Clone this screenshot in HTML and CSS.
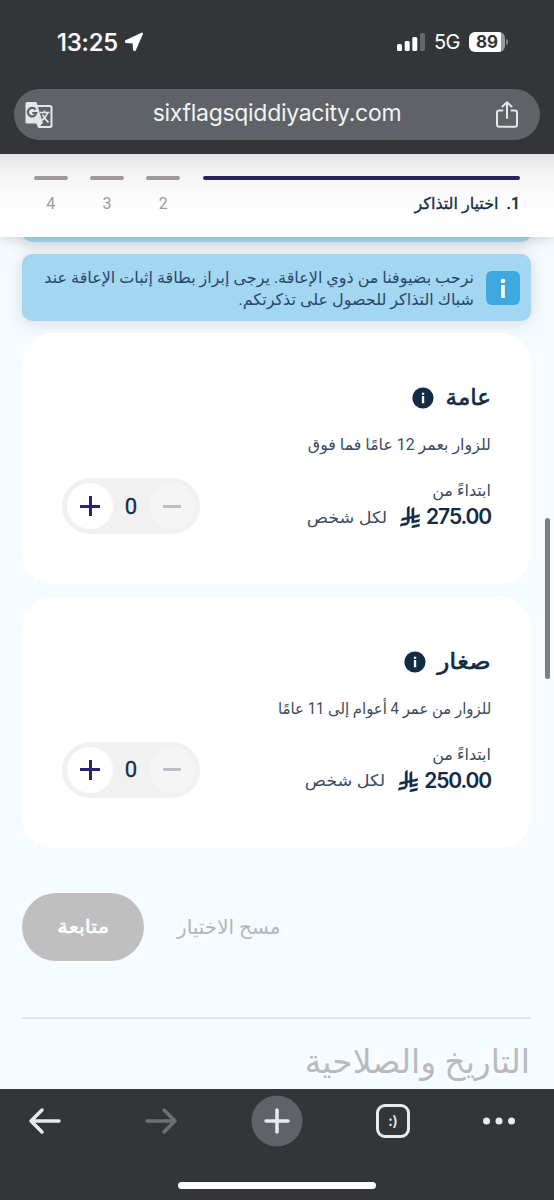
FILE: index.html
```html
<!DOCTYPE html>
<html lang="ar" dir="rtl">
<head>
<meta charset="utf-8">
<title>اختيار التذاكر</title>
<link rel="stylesheet" href="styles.css">
</head>
<body>
<svg class="defs" width="0" height="0">
  <symbol id="riyal" viewBox="0 0 1124.14 1256.39">
    <path d="M699.62,1113.02c-20.06,44.48-33.32,92.75-38.4,143.37l424.51-90.24c20.06-44.47,33.31-92.75,38.4-143.37l-424.51,90.24Z"/>
    <path d="M1085.73,895.8c20.06-44.47,33.32-92.75,38.4-143.37l-330.68,70.33v-135.2l292.27-62.11c20.06-44.47,33.32-92.75,38.4-143.37l-330.68,70.27V66.13c-50.67,28.45-95.67,66.32-132.25,110.99v403.35l-132.25,28.11V0c-50.67,28.44-95.67,66.32-132.25,110.99v525.69l-295.91,62.88c-20.06,44.47-33.33,92.75-38.42,143.37l334.33-71.05v170.26l-358.3,76.14c-20.06,44.47-33.32,92.75-38.4,143.37l375.04-79.7c30.53-6.35,56.77-24.4,73.83-49.24l68.78-101.97c7.14-10.55,11.3-23.27,11.3-36.97v-149.98l132.25-28.11v270.4l424.53-90.28Z"/>
  </symbol>
  <symbol id="info" viewBox="0 0 22 22">
    <circle cx="11" cy="11" r="10.6"/>
    <path fill="#fff" d="M9.900 5.800h2.300v2H9.900zM9.900 9h2.300v7.200H9.900z"/>
  </symbol>
</svg>

<header class="browser" dir="ltr">
  <div class="status">
    <div class="clock">13:25
      <svg width="20" height="20" viewBox="0 0 20 20"><path fill="#fff" stroke="#fff" stroke-width="2" stroke-linejoin="round" d="M18 1.600 1.800 9.200 1.900 9.900 9.500 10.500 10.100 17.900 10.800 18z"/></svg>
    </div>
    <div class="signal">
      <svg width="28" height="18" viewBox="0 0 28 18"><g fill="#fff"><rect x="0" y="11" width="5" height="7" rx="1.500"/><rect x="7.700" y="8" width="5" height="10" rx="1.500"/><rect x="15.300" y="4" width="5" height="14" rx="1.500"/><rect x="23" y="0" width="5" height="18" rx="1.500" opacity=".25"/></g></svg>
      <span class="net">5G</span>
      <span class="battery">89</span><span class="cap"></span>
    </div>
  </div>
  <div class="address">
    <svg width="28" height="28" viewBox="0 0 28 28">
      <path fill="none" stroke="#e4e6e9" stroke-width="2" stroke-linejoin="round" d="M12 5h13q1.500 0 1.500 1.500v18q0 1.500-1.500 1.500H14l-2-4"/>
      <path fill="#e4e6e9" d="M2 1h8.500q1 0 1.300 1L18 22.500H2q-1.500 0-1.500-1.500V2.500Q.5 1 2 1zM12.500 22.500h4.700l-3.400 4z"/>
      <path fill="none" stroke="#5f6367" stroke-width="2.200" d="M10.500 8.700A4.200 4.200 0 1 0 11.200 12H7.300"/>
      <path fill="none" stroke="#e4e6e9" stroke-width="1.700" d="M15 11.500h9.500M19.500 9.500v2M22.500 11.500q-1.500 5-6 8M17.500 13.500q2 4.500 6 8"/>
    </svg>
    <span class="url">sixflagsqiddiyacity.com</span>
    <svg width="24" height="28" viewBox="0 0 24 28" fill="none" stroke="#e4e6e9" stroke-width="2" stroke-linecap="round" stroke-linejoin="round"><path d="M7.500 9.500H4Q2 9.500 2 11.500v12.200q0 2 2 2h16q2 0 2-2V11.500q0-2-2-2h-3.500M12 17V1.500M7.500 5.500 12 1.300l4.500 4.200"/></svg>
  </div>
</header>

<nav class="steps">
  <div class="step current"><span class="label">1.&nbsp; اختيار التذاكر</span></div>
  <div class="step"><span class="label">2</span></div>
  <div class="step"><span class="label">3</span></div>
  <div class="step"><span class="label">4</span></div>
</nav>

<main class="page">
  <div class="notice previous"></div>
  <div class="notice">
    <span class="badge"><svg width="34" height="34" viewBox="0 0 34 34" fill="#fff"><circle cx="17" cy="10" r="2.300"/><rect x="15.200" y="14" width="3.600" height="13"/></svg></span>
    <p><span class="fit">نرحب بضيوفنا من ذوي الإعاقة. يرجى إبراز بطاقة إثبات الإعاقة عند</span><span class="fit">شباك التذاكر للحصول على تذكرتكم.</span></p>
  </div>

  <section class="card">
    <h2><span>عامة</span><svg class="info" width="22" height="22"><use href="#info"/></svg></h2>
    <p class="desc"><span class="fit">للزوار بعمر 12 عامًا فما فوق</span></p>
    <div class="row">
      <div>
        <p class="from">ابتداءً من</p>
        <p class="price"><b>275.00</b><svg width="20" height="22"><use href="#riyal"/></svg><span class="fit">لكل شخص</span></p>
      </div>
      <div class="stepper"><span class="btn off"><i></i></span><span class="count">0</span><span class="btn plus"><i></i></span></div>
    </div>
  </section>

  <section class="card">
    <h2><span class="fit wide">صغار</span><svg class="info" width="22" height="22"><use href="#info"/></svg></h2>
    <p class="desc"><span class="fit narrow">للزوار من عمر 4 أعوام إلى 11 عامًا</span></p>
    <div class="row">
      <div>
        <p class="from">ابتداءً من</p>
        <p class="price"><b>250.00</b><svg width="20" height="22"><use href="#riyal"/></svg><span class="fit">لكل شخص</span></p>
      </div>
      <div class="stepper"><span class="btn off"><i></i></span><span class="count">0</span><span class="btn plus"><i></i></span></div>
    </div>
  </section>

  <div class="actions">
    <span class="clear">مسح الاختيار</span>
    <span class="next"><span>متابعة</span></span>
  </div>
  <h1>التاريخ والصلاحية</h1>
  <span class="scrollbar"></span>
</main>

<footer class="toolbar" dir="ltr">
  <div class="tools">
    <svg class="back" width="34" height="28" viewBox="0 0 34 28" fill="none" stroke="#e8eaed" stroke-width="3.500" stroke-linecap="round" stroke-linejoin="round"><path d="M31 14H3M14 3 3 14l11 11"/></svg>
    <svg width="34" height="28" viewBox="0 0 34 28" fill="none" stroke="#6d7073" stroke-width="3.500" stroke-linecap="round" stroke-linejoin="round"><path d="M3 14h28M20 3l11 11-11 11"/></svg>
    <svg width="52" height="52" viewBox="0 0 52 52"><circle cx="26" cy="26" r="25.500" fill="#5f6367"/><path stroke="#e8eaed" stroke-width="3.500" stroke-linecap="round" d="M26 15v22M15 26h22"/></svg>
    <span class="tabs">:)</span>
    <svg width="32" height="8" viewBox="0 0 32 8" fill="#e8eaed"><circle cx="3.500" cy="4" r="3.500"/><circle cx="16" cy="4" r="3.500"/><circle cx="28.500" cy="4" r="3.500"/></svg>
  </div>
  <div class="home"></div>
</footer>
</body>
</html>
```
FILE: styles.css
```css
* { box-sizing: border-box; }
body { margin: 0; width: 554px; height: 1200px; overflow: hidden; display: flex; flex-direction: column; background: #f6fbff; font-family: Roboto, "DejaVu Sans", sans-serif; color: #132c44; }
h1, h2, p { margin: 0; font-weight: 400; }
svg { flex: none; }
.defs { position: absolute; }
.fit { display: inline-block; white-space: nowrap; transform-origin: right center; }

.browser { height: 154px; flex: none; background: #333639; color: #fff; font-family: Inter, sans-serif; }
.status { height: 89px; padding: 0 46px 5px 57px; display: flex; align-items: center; justify-content: space-between; }
.clock { display: flex; align-items: center; gap: 6px; font-size: 24px; font-weight: 500; letter-spacing: -.2px; -webkit-text-stroke: .2px; }
.signal { display: flex; align-items: center; }
.net { margin: 0 9px; font-size: 20px; letter-spacing: -.5px; }
.battery { width: 36px; height: 20px; border-radius: 6px; background: linear-gradient(90deg, #fff 88%, #96989a 88%); color: #333639; font-size: 17px; font-weight: 700; line-height: 20px; padding-left: 7px; }
.cap { width: 2px; height: 6px; margin-left: 1px; border-radius: 0 2px 2px 0; background: #7c7e80; }
.address { height: 51px; margin: 0 14px; padding: 0 21px 0 11px; border-radius: 26px; background: #5f6367; display: flex; align-items: center; justify-content: space-between; }
.url { margin-left: 6px; font-size: 23px; line-height: 48px; padding-bottom: 3px; letter-spacing: -.3px; color: #f1f3f4; }

.steps { height: 83px; flex: none; position: relative; z-index: 1; display: flex; gap: 22.500px; padding: 22px 34px 0; background: linear-gradient(#e4e4e6, #f5f5f6 20px, #fdfdfd 50px, #fff); box-shadow: 0 2px 12px rgba(60, 60, 70, .2); }
.step { width: 33.700px; text-align: center; color: #a0999c; }
.step::before { content: ""; display: block; height: 4px; border-radius: 2px; background: #a0999c; }
.step .label { display: block; margin-top: 12px; font-size: 16px; line-height: 24px; }
.step.current { flex: 1; text-align: right; color: #132c44; }
.step.current::before { background: #25265f; }
.step.current .label { font-weight: 500; -webkit-text-stroke: .3px; }

.page { flex: 1; min-height: 0; overflow: hidden; position: relative; padding: 0 23px 0 22px; }
.notice { height: 67px; margin-bottom: 12px; padding: 17px 11px 0; border-radius: 10px; background: #a3d6f1; display: flex; gap: 12px; box-shadow: 0 2px 16px rgba(80, 80, 90, .2); }
.notice.previous { margin-top: -62px; }
.badge { width: 34px; height: 34px; border-radius: 6px; background: #3ea9df; }
.notice p { flex: 1; margin-top: -4px; font-size: 16px; line-height: 22px; color: #28486a; }
.notice .fit { display: block; width: max-content; }

.card { height: 251px; margin-bottom: 12.500px; padding: 49px 40px 0; border-radius: 32px; background: #fff; }
.card h2 { height: 32px; display: flex; align-items: center; gap: 12px; font-size: 23px; line-height: 32px; -webkit-text-stroke: .6px; }
.card h2 .wide { margin-left: 4px; transform: scaleX(1.1); }
.info { fill: #132c44; }
.desc { margin-top: 18px; font-size: 16px; line-height: 26px; color: #3c4c60; }
.desc .fit { transform: scaleX(.99); }
.desc .narrow { transform: scaleX(.93); }
.row { margin-top: 20px; display: flex; justify-content: space-between; }
.from { font-size: 16px; line-height: 26px; color: #3c4c60; }
.price { height: 26px; display: flex; align-items: center; gap: 6px; font-size: 16px; color: #3c4c60; }
.price b { font: 600 21px/26px Inter, sans-serif; letter-spacing: -1.100px; color: #132c44; }
.price svg { fill: #132c44; stroke: #132c44; stroke-width: 20px; overflow: visible; }
.price .fit { margin-right: 7px; transform: scaleX(1.1); }
.stepper { width: 138px; height: 56px; padding: 0 5px; border-radius: 28px; background: #f1f1f1; display: flex; align-items: center; justify-content: space-between; }
.btn { width: 46px; height: 46px; border-radius: 50%; background: #fff; display: grid; place-items: center; color: #25266f; }
.btn i { width: 20px; height: 3px; background: currentColor; }
.btn.plus i { background: linear-gradient(currentColor, currentColor) center / 20px 3px no-repeat, linear-gradient(currentColor, currentColor) center / 3px 20px no-repeat; width: 21px; height: 21px; }
.btn.off { background: #f5f5f5; color: #bdbcc9; }
.btn.off i { width: 18px; }
.count { font-size: 22px; font-weight: 400; -webkit-text-stroke: .3px; }

.actions { height: 68px; margin-top: 45px; display: flex; justify-content: flex-end; align-items: center; gap: 33px; }
.clear { font-size: 20px; color: #b4b5b7; }
.next { width: 122px; height: 68px; border-radius: 34px; background: #bfbfbf; color: #fff; font-size: 19px; -webkit-text-stroke: .5px; display: grid; place-items: center; }
.next span { transform: scaleX(1.12); }
h1 { margin-top: 56px; padding: 20px 1px 0 0; border-top: 2px solid #dfe4e8; font-size: 33px; line-height: 46px; color: #b9babc; }
.scrollbar { position: absolute; right: 4px; top: 281px; width: 5px; height: 161px; border-radius: 3px; background: #7c7e80; }

.toolbar { height: 111px; flex: none; background: #333639; }
.tools { height: 63px; padding-left: 28px; display: flex; align-items: center; gap: 73px; }
.back { margin-right: 9px; }
.tabs { width: 34px; height: 34px; border: 3px solid #e8eaed; border-radius: 9px; color: #e8eaed; font: 600 14px/27px Inter, sans-serif; text-align: center; }
.home { width: 198px; height: 7px; margin: 30px auto 0; border-radius: 4px; background: #fff; }
```
